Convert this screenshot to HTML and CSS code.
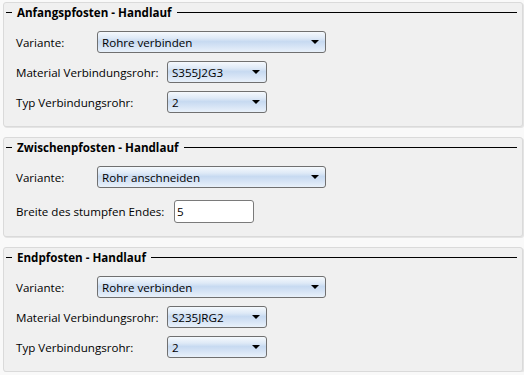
FILE: index.html
```html
<!DOCTYPE html>
<html lang="de">
<head>
  <meta charset="UTF-8">
  <meta name="viewport" content="width=device-width, initial-scale=1.0">
  <title>Pfosten - Handlauf</title>
  <link rel="stylesheet" href="styles.css">
</head>
<body>
  <div class="page">

    <div class="group">
      <div class="legend"><span>Anfangspfosten - Handlauf</span></div>
      <div class="rows">
        <div class="row">
          <label class="label-short">Variante:</label>
          <div class="combo combo-wide"><span>Rohre verbinden</span><i class="arrow"></i></div>
        </div>
        <div class="row">
          <label class="label-long">Material Verbindungsrohr:</label>
          <div class="combo combo-small"><span>S355J2G3</span><i class="arrow"></i></div>
        </div>
        <div class="row">
          <label class="label-long">Typ Verbindungsrohr:</label>
          <div class="combo combo-small"><span>2</span><i class="arrow"></i></div>
        </div>
      </div>
    </div>

    <div class="group">
      <div class="legend"><span>Zwischenpfosten - Handlauf</span></div>
      <div class="rows rows-loose">
        <div class="row">
          <label class="label-short">Variante:</label>
          <div class="combo combo-wide"><span>Rohr anschneiden</span><i class="arrow"></i></div>
        </div>
        <div class="row">
          <label class="label-input">Breite des stumpfen Endes:</label>
          <input class="textbox" type="text" value="5">
        </div>
      </div>
    </div>

    <div class="group">
      <div class="legend"><span>Endpfosten - Handlauf</span></div>
      <div class="rows">
        <div class="row">
          <label class="label-short">Variante:</label>
          <div class="combo combo-wide"><span>Rohre verbinden</span><i class="arrow"></i></div>
        </div>
        <div class="row">
          <label class="label-long">Material Verbindungsrohr:</label>
          <div class="combo combo-small"><span>S235JRG2</span><i class="arrow"></i></div>
        </div>
        <div class="row">
          <label class="label-long">Typ Verbindungsrohr:</label>
          <div class="combo combo-small"><span>2</span><i class="arrow"></i></div>
        </div>
      </div>
    </div>

  </div>
</body>
</html>
```

FILE: styles.css
```css
body {
  margin: 0;
  background-color: #f9f9f9;
  font-family: "Open Sans", "Liberation Sans", sans-serif;
  font-size: 11.6px;
  color: #000;
}
.page {
  padding: 2px 1px 0 3px;
  display: flex;
  flex-direction: column;
  gap: 10px;
}
.group {
  background-color: #f0f0f0;
  border: 1px solid #dadada;
  border-radius: 3px;
  box-shadow: 1px 1px 0 #e4e4e4;
  padding: 1px 5px 13px 2px;
}
.legend {
  display: flex;
  align-items: center;
  height: 16px;
  font-weight: bold;
}
.legend::before {
  content: "";
  width: 6px;
  border-top: 1px solid #000;
}
.legend::after {
  content: "";
  flex: 1;
  border-top: 1px solid #000;
}
.legend span {
  padding: 0 5px;
}
.rows {
  margin-top: 11px;
  padding-left: 10px;
  display: flex;
  flex-direction: column;
  gap: 8px;
}
.rows-loose {
  gap: 12px;
}
.row {
  display: flex;
  align-items: center;
}
.label-short {
  width: 81px;
}
.label-long {
  width: 151px;
}
.label-input {
  width: 158px;
}
.combo {
  height: 22px;
  box-sizing: border-box;
  border: 1px solid #707070;
  border-radius: 3px;
  background: linear-gradient(to bottom, #f5f9fd 0%, #dfeaf7 30%, #c7daf1 48%, #d5e3f5 70%, #e9f1fa 100%);
  display: flex;
  align-items: center;
  padding: 0 6px 0 4px;
}
.combo span {
  flex: 1;
}
.combo-wide {
  width: 229px;
}
.combo-small {
  width: 100px;
}
.arrow {
  width: 0;
  height: 0;
  border-left: 4px solid transparent;
  border-right: 4px solid transparent;
  border-top: 4px solid #000;
}
.textbox {
  width: 80px;
  height: 23px;
  box-sizing: border-box;
  margin: 0;
  border: 1px solid #7a7a7a;
  border-radius: 3px;
  background: #fff;
  padding: 0 2px;
  font: inherit;
  color: #000;
}
```
